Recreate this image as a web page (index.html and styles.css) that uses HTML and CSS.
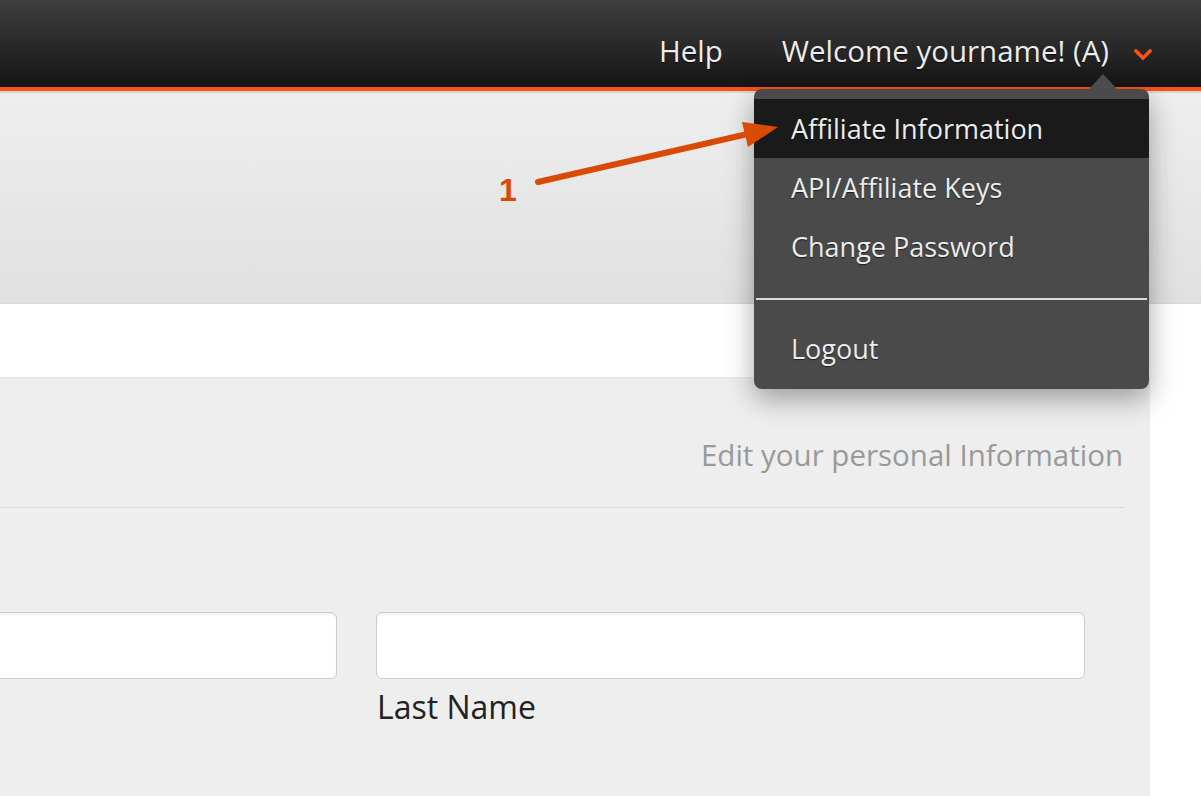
FILE: index.html
```html
<!DOCTYPE html>
<html lang="en">
<head>
  <meta charset="UTF-8">
  <meta name="viewport" content="width=device-width, initial-scale=1.0">
  <title>Affiliate Account</title>

  <link rel="stylesheet" href="styles.css">
</head>
<body>

  <header class="topbar">
    <nav class="topnav">
      <a class="topnav-link" href="#">Help</a>
      <a class="topnav-link user" href="#">Welcome yourname! (A)</a>
      <svg class="chevron" width="18" height="12" viewBox="0 0 18 12">
        <path d="M2 2 L9 9 L16 2" fill="none" stroke="#ff5016" stroke-width="3.4" stroke-linecap="square"/>
      </svg>
    </nav>

    <div class="dropdown">
      <span class="caret"></span>
      <a class="dropdown-item active" href="#">Affiliate Information</a>
      <a class="dropdown-item" href="#">API/Affiliate Keys</a>
      <a class="dropdown-item" href="#">Change Password</a>
      <div class="dropdown-divider"></div>
      <a class="dropdown-item logout" href="#">Logout</a>
    </div>
  </header>

  <div class="subbar"></div>

  <main class="card">
    <div class="card-title">Edit your personal Information</div>
    <hr class="card-rule">

    <div class="fields">
      <div class="field first">
        <input type="text" class="field-input">
      </div>
      <div class="field second">
        <input type="text" class="field-input">
        <label class="field-label">Last Name</label>
      </div>
    </div>
  </main>

  <!-- annotation -->
  <svg class="annotation" width="1201" height="796" viewBox="0 0 1201 796">
    <line x1="538" y1="182" x2="752" y2="133" stroke="#d94a04" stroke-width="6" stroke-linecap="round"/>
    <polygon points="742,122 778,127 748,147" fill="#d94a04"/>
    <text x="499" y="201" class="annotation-num">1</text>
  </svg>

</body>
</html>
```

FILE: styles.css
```css
body {
  font-family: 'Open Sans', 'Liberation Sans', sans-serif;
  margin: 0;
  padding: 0;
  background-color: #fff;
  overflow: hidden;
  height: 796px;
}

.topbar {
  position: relative;
  height: 87px;
  background: linear-gradient(to bottom, #3f3f3f 0%, #151515 100%);
  border-bottom: 4px solid #ff5016;
  box-shadow: 0 2px 0 #d6d6d6;
}

.topnav {
  display: flex;
  justify-content: flex-end;
  align-items: flex-start;
  padding-top: 32px;
  padding-right: 49px;
}

.topnav-link {
  color: #ececec;
  text-decoration: none;
  font-size: 29.5px;
  line-height: 38px;
  text-shadow: 0 1px 1px rgba(0, 0, 0, 0.7);
}

.topnav-link.user {
  margin-left: 59px;
}

.chevron {
  margin-left: 25px;
  margin-top: 17px;
}

/* dropdown menu */
.dropdown {
  position: absolute;
  top: 89px;
  left: 754px;
  width: 395px;
  padding: 10px 0 11px;
  background-color: #4a4a4a;
  border-radius: 8px;
  box-shadow: 0 10px 28px rgba(0, 0, 0, 0.35);
  z-index: 5;
}

.caret {
  position: absolute;
  top: -15px;
  right: 32px;
  width: 0;
  height: 0;
  border-left: 14px solid transparent;
  border-right: 14px solid transparent;
  border-bottom: 15px solid #4d4d4d;
}

.dropdown-item {
  display: block;
  height: 59px;
  line-height: 59px;
  padding-left: 37px;
  font-size: 27px;
  color: #ececec;
  text-decoration: none;
  text-shadow: 0 1px 1px rgba(0, 0, 0, 0.6);
}

.dropdown-item.active {
  background-color: #1a1a1a;
}

.dropdown-divider {
  height: 2px;
  margin: 22px 2px 19px;
  background-color: #dadada;
}

.subbar {
  height: 210px;
  background: linear-gradient(to bottom, #eeeeee 0%, #e0e0e0 100%);
  border-top: 2px solid #d6d6d6;
  border-bottom: 1px solid #d9d9d9;
}

/* personal info card */
.card {
  margin-top: 73px;
  margin-right: 51px;
  height: 420px;
  background-color: #eeeeee;
  border-top: 1px solid #e6e6e6;
  padding-top: 57px;
  box-sizing: border-box;
}

.card-title {
  text-align: right;
  padding-right: 27px;
  font-size: 29.5px;
  line-height: 40px;
  color: #999;
}

.card-rule {
  border: none;
  height: 1px;
  background-color: #d9d9d9;
  margin: 32px 26px 0 0;
}

.fields {
  display: flex;
  gap: 39px;
  margin-left: -60px;
  margin-top: 104px;
}

.field.first {
  width: 397px;
}

.field.second {
  width: 709px;
}

.field-input {
  display: block;
  width: 100%;
  height: 67px;
  box-sizing: border-box;
  border: 1px solid #cccccc;
  border-radius: 6px;
  background-color: #fff;
  box-shadow: inset 0 2px 2px rgba(0, 0, 0, 0.06);
}

.field-label {
  display: block;
  margin-top: 8px;
  padding-left: 1px;
  font-size: 32px;
  line-height: 40px;
  color: #222;
}

.annotation {
  position: absolute;
  top: 0;
  left: 0;
  pointer-events: none;
  z-index: 10;
}

.annotation-num {
  font-family: 'Liberation Sans', Arial, sans-serif;
  font-weight: bold;
  font-size: 32px;
  fill: #d94a04;
}
```
